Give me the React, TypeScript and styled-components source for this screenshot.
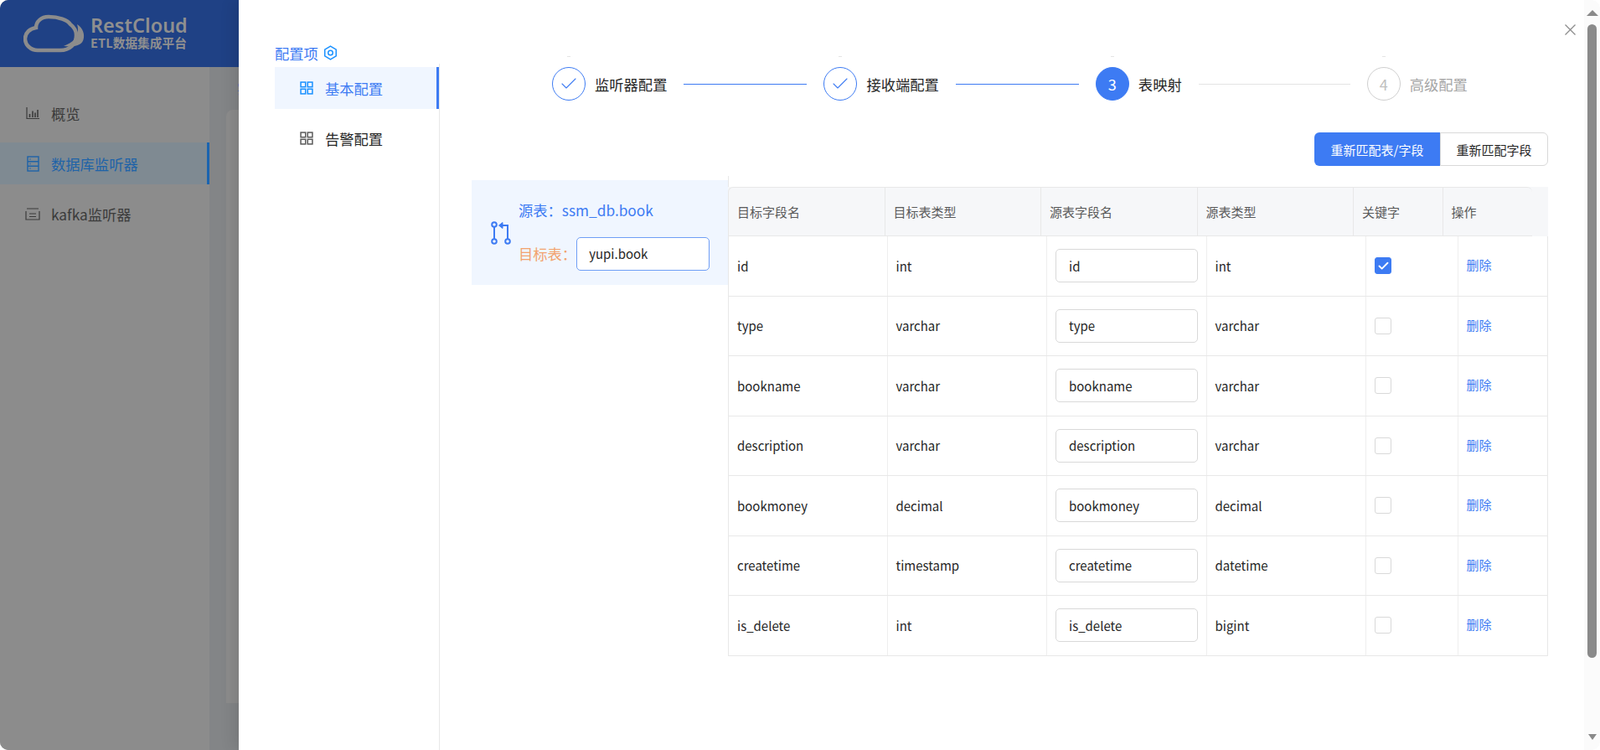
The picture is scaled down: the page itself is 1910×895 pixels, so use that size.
import React from "react";
import styled, { createGlobalStyle } from "styled-components";
import { Check } from "lucide-react";

const GlobalStyle = createGlobalStyle`
  html, body, #root {
    margin: 0;
    height: 100%;
    background: #fff;
  }
  body {
    font-family: "Noto Sans CJK SC", "Noto Sans", sans-serif;
    overflow: hidden;
  }
  * {
    box-sizing: border-box;
  }
`;

interface FieldRow {
  target: string;
  targetType: string;
  source: string;
  sourceType: string;
  isKey?: boolean;
}

const rows: FieldRow[] = [
  { target: "id", targetType: "int", source: "id", sourceType: "int", isKey: true },
  { target: "type", targetType: "varchar", source: "type", sourceType: "varchar" },
  { target: "bookname", targetType: "varchar", source: "bookname", sourceType: "varchar" },
  { target: "description", targetType: "varchar", source: "description", sourceType: "varchar" },
  { target: "bookmoney", targetType: "decimal", source: "bookmoney", sourceType: "decimal" },
  { target: "createtime", targetType: "timestamp", source: "createtime", sourceType: "datetime" },
  { target: "is_delete", targetType: "int", source: "is_delete", sourceType: "bigint" },
];

const steps = [
  { label: "监听器配置", state: "done", line: 147 },
  { label: "接收端配置", state: "done", line: 147 },
  { label: "表映射", state: "active", line: 181 },
  { label: "高级配置", state: "todo", line: 0 },
];

const headers = ["目标字段名", "目标表类型", "源表字段名", "源表类型", "关键字", "操作"];

const CloudLogo = () => (
  <svg width="74" height="46" viewBox="0 0 74 46" fill="none">
    <path
      d="M48 38c10 1 23 1 24-10 1-7-3-13-8-16 2 6 1 14-3 18-3 3-8 6-13 8z"
      fill="#8c8c8c"
    />
    <path
      d="M30 3c-9 0-15 6-15 13-7 1-13 6-13 13 0 8 7 14 15 14h27c11 0 19-7 19-18 0-6-3-10-7-13C53 7 42 3 30 3z"
      stroke="#8c8c8c"
      strokeWidth="4.500"
    />
  </svg>
);

const ChartIcon = () => (
  <svg width="16" height="16" viewBox="0 0 16 16" fill="none" stroke="#3b3b3b" strokeWidth="1.2">
    <path d="M1 1v13.500h15" />
    <path d="M4.500 13V9M8 13V5.500M11 13V7.500M14 13V4" strokeWidth="1.600" />
  </svg>
);

const DatabaseIcon = () => (
  <svg width="15" height="19" viewBox="0 0 15 19" fill="none" stroke="#1e63a8" strokeWidth="1.4">
    <rect x="1" y="1" width="13" height="17" />
    <path d="M1 6.700h13M1 12.300h13" />
    <path d="M3.500 4h1M3.500 9.500h1M3.500 15h1" />
  </svg>
);

const ListIcon = () => (
  <svg width="18" height="15" viewBox="0 0 18 15" fill="none" stroke="#3b3b3b" strokeWidth="1.2">
    <path d="M2 1h14M1 4v10h16V4M5 7h8M5 10.500h8" />
  </svg>
);

const HexIcon = () => (
  <svg width="17" height="18" viewBox="0 0 15 16" fill="none" stroke="#1890ff" strokeWidth="1.3">
    <path d="M7.500 1l6 3.500v7l-6 3.500-6-3.500v-7z" />
    <circle cx="7.500" cy="8" r="2.500" />
  </svg>
);

const GridIcon = ({ color }: { color: string }) => (
  <svg width="16" height="16" viewBox="0 0 15 15" fill="none" stroke={color} strokeWidth="1.4">
    <rect x="1" y="1" width="5.300" height="5.300" />
    <rect x="8.700" y="1" width="5.300" height="5.300" />
    <rect x="1" y="8.700" width="5.300" height="5.300" />
    <rect x="8.700" y="8.700" width="5.300" height="5.300" />
  </svg>
);

const BranchIcon = () => (
  <svg width="24" height="28" viewBox="0 0 24 28" fill="none" stroke="#3d7bf3" strokeWidth="2">
    <circle cx="4" cy="4" r="2.800" />
    <circle cx="4" cy="24" r="2.800" />
    <circle cx="20" cy="24" r="2.800" />
    <path d="M4 7v14M20 21V5h-6" />
    <path d="M14 1.500v7L9.500 5z" fill="#3d7bf3" strokeWidth="1" />
  </svg>
);

const App: React.FC = () => {
  return (
    <Page>
      <GlobalStyle />
      <Shell>
        <TopBar>
          <CloudLogo />
          <Brand>
            <BrandName>RestCloud</BrandName>
            <BrandSub>ETL数据集成平台</BrandSub>
          </Brand>
        </TopBar>
        <ShellBody>
          <SideNav>
            <SideItem>
              <SideIcon><ChartIcon /></SideIcon>
              概览
            </SideItem>
            <SideItem $active>
              <SideIcon><DatabaseIcon /></SideIcon>
              数据库监听器
            </SideItem>
            <SideItem>
              <SideIcon><ListIcon /></SideIcon>
              kafka监听器
            </SideItem>
          </SideNav>
          <Content>
            <Crumb>实</Crumb>
            <ContentCard />
          </Content>
        </ShellBody>
      </Shell>

      <Drawer>
        <ConfigColumn>
          <ConfigTitle>
            配置项 <HexIcon />
          </ConfigTitle>
          <ConfigMenu>
            <ConfigItem $active>
              <GridIcon color="#1890ff" />
              基本配置
            </ConfigItem>
            <ConfigItem>
              <GridIcon color="#595959" />
              告警配置
            </ConfigItem>
          </ConfigMenu>
        </ConfigColumn>

        <Main>
          <Steps>
            {steps.map((step, i) => (
              <React.Fragment key={step.label}>
                <StepCircle $state={step.state}>
                  {step.state === "done" ? <Check size={24} strokeWidth={1.1} /> : i + 1}
                </StepCircle>
                <StepLabel $state={step.state}>{step.label}</StepLabel>
                {step.line > 0 && <StepLine $width={step.line} $done={step.state === "done"} />}
              </React.Fragment>
            ))}
          </Steps>

          <Actions>
            <PrimaryButton>重新匹配表/字段</PrimaryButton>
            <DefaultButton>重新匹配字段</DefaultButton>
          </Actions>

          <Mapping>
            <TableCard>
              <BranchIcon />
              <TableCardText>
                <SourceLine>源表：ssm_db.book</SourceLine>
                <TargetLine>
                  目标表：
                  <TargetInput defaultValue="yupi.book" />
                </TargetLine>
              </TableCardText>
            </TableCard>

            <FieldTable>
              <HeadWrap>
                <HeadRow>
                  {headers.map((h) => (
                    <HeadCell key={h}>{h}</HeadCell>
                  ))}
                </HeadRow>
              </HeadWrap>
              {rows.map((row) => (
                <BodyRow key={row.target}>
                  <Cell>{row.target}</Cell>
                  <Cell>{row.targetType}</Cell>
                  <Cell>
                    <FieldInput defaultValue={row.source} />
                  </Cell>
                  <Cell>{row.sourceType}</Cell>
                  <Cell>
                    <CheckBox $checked={row.isKey}>
                      {row.isKey && <Check size={15} strokeWidth={3} color="#fff" />}
                    </CheckBox>
                  </Cell>
                  <Cell>
                    <DeleteLink>删除</DeleteLink>
                  </Cell>
                </BodyRow>
              ))}
            </FieldTable>
          </Mapping>
        </Main>

        <CloseButton aria-label="close">
          <svg width="15" height="15" viewBox="0 0 15 15" stroke="#8c8c8c" strokeWidth="1.300">
            <path d="M1.500 1.500l12 12M13.500 1.500l-12 12" />
          </svg>
        </CloseButton>

        <ScrollTrack>
          <ArrowUp />
          <ScrollThumb />
          <ArrowDown />
        </ScrollTrack>
      </Drawer>
    </Page>
  );
};

const Page = styled.div`
  position: relative;
  width: 1910px;
  height: 895px;
  overflow: hidden;
  background: #fff;
`;

const Shell = styled.div`
  display: flex;
  flex-direction: column;
  height: 100%;
  border-radius: 10px;
  overflow: hidden;
  background: #8c8c8c;
`;

const TopBar = styled.div`
  display: flex;
  align-items: center;
  gap: 6px;
  height: 80px;
  padding-left: 28px;
  background: #1f4185;
`;

const Brand = styled.div`
  display: flex;
  flex-direction: column;
  color: #8f8f8f;
  margin-top: -3px;
`;

const BrandName = styled.div`
  font-family: "Noto Sans", sans-serif;
  font-size: 23.500px;
  font-weight: 600;
  line-height: 24px;
`;

const BrandSub = styled.div`
  font-size: 14.700px;
  font-weight: 700;
  line-height: 18px;
  white-space: nowrap;
`;

const ShellBody = styled.div`
  flex: 1;
  display: flex;
  min-height: 0;
`;

const SideNav = styled.div`
  width: 250px;
  padding-top: 30px;
  display: flex;
  flex-direction: column;
  gap: 10px;
  background: #8c8c8c;
`;

const SideItem = styled.div<{ $active?: boolean }>`
  display: flex;
  align-items: center;
  height: 50px;
  padding-left: 30px;
  font-size: 17.300px;
  color: ${(p) => (p.$active ? "#1e63a8" : "#3b3b3b")};
  background: ${(p) => (p.$active ? "#7f8a92" : "transparent")};
  border-right: 3px solid ${(p) => (p.$active ? "#1a64b0" : "transparent")};
`;

const SideIcon = styled.span`
  display: flex;
  justify-content: center;
  width: 18px;
  margin-right: 13px;
`;

const Content = styled.div`
  flex: 1;
  display: flex;
  flex-direction: column;
  padding: 12px 0 56px 20px;
  background: #838587;
`;

const Crumb = styled.div`
  height: 39px;
  margin-left: 13px;
  font-size: 16px;
  line-height: 26px;
  color: #1e63a8;
`;

const ContentCard = styled.div`
  flex: 1;
  background: #8c8c8c;
  border-radius: 8px 0 0 0;
`;

const Drawer = styled.div`
  position: absolute;
  top: 0;
  bottom: 0;
  left: 285px;
  right: 0;
  display: flex;
  background: #fff;
  box-shadow: -6px 0 16px rgba(0, 0, 0, 0.1);
`;

const ConfigColumn = styled.div`
  width: 240px;
  padding-left: 43px;
  display: flex;
  flex-direction: column;
  flex-shrink: 0;
`;

const ConfigTitle = styled.div`
  display: flex;
  align-items: center;
  gap: 6px;
  height: 26px;
  margin-top: 50px;
  font-size: 17.300px;
  color: #3d7bf3;
`;

const ConfigMenu = styled.div`
  flex: 1;
  padding-top: 4px;
  display: flex;
  flex-direction: column;
  gap: 10px;
  border-right: 1px solid #e8e8e8;
`;

const ConfigItem = styled.div<{ $active?: boolean }>`
  display: flex;
  align-items: center;
  gap: 14px;
  height: 50px;
  padding-left: 30px;
  font-size: 17.300px;
  color: ${(p) => (p.$active ? "#3d7bf3" : "#262626")};
  background: ${(p) => (p.$active ? "#f0f6ff" : "transparent")};
  border-right: 3px solid ${(p) => (p.$active ? "#3d7bf3" : "transparent")};
`;

const Main = styled.div`
  flex: 1;
  min-width: 0;
  padding: 80px 43px 0 38px;
  display: flex;
  flex-direction: column;
`;

const Steps = styled.div`
  display: flex;
  align-items: center;
  height: 40px;
  padding-left: 96px;
`;

const StepCircle = styled.div<{ $state: string }>`
  position: relative;
  display: flex;
  align-items: center;
  justify-content: center;
  flex-shrink: 0;
  width: 40px;
  height: 40px;
  border-radius: 50%;
  font-size: 18px;
  color: ${(p) => (p.$state === "active" ? "#fff" : p.$state === "done" ? "#3d7bf3" : "#bfbfbf")};
  background: ${(p) => (p.$state === "active" ? "#3d7bf3" : "#fff")};
  border: 1px solid ${(p) => (p.$state === "todo" ? "#cfcfcf" : "#3d7bf3")};

  &::before {
    content: "";
    position: absolute;
    top: -14px;
    left: 50%;
    width: 4px;
    height: 1px;
    margin-left: -2px;
    background: #e4e4e4;
  }
`;

const StepLabel = styled.div<{ $state: string }>`
  margin-left: 11px;
  font-size: 17.300px;
  white-space: nowrap;
  color: ${(p) => (p.$state === "todo" ? "#a6a6a6" : "#262626")};
`;

const StepLine = styled.div<{ $width: number; $done: boolean }>`
  width: ${(p) => p.$width}px;
  height: 1px;
  margin: 0 20px;
  background: ${(p) => (p.$done ? "#3d7bf3" : "#e4e4e4")};
`;

const Actions = styled.div`
  display: flex;
  justify-content: flex-end;
  margin-top: 38px;
`;

const PrimaryButton = styled.button`
  width: 150px;
  height: 40px;
  border: 0;
  border-radius: 6px 0 0 6px;
  background: #3d7bf3;
  color: #fff;
  font: inherit;
  font-size: 15px;
`;

const DefaultButton = styled.button`
  width: 129px;
  height: 40px;
  border: 1px solid #d9d9d9;
  border-radius: 0 6px 6px 0;
  background: #fff;
  color: #262626;
  font: inherit;
  font-size: 15px;
`;

const Mapping = styled.div`
  display: flex;
  margin-top: 12px;
`;

const TableCard = styled.div`
  display: flex;
  align-items: center;
  gap: 9px;
  flex-shrink: 0;
  width: 306px;
  height: 125px;
  margin-top: 5px;
  padding-left: 23px;
  background: #f0f6ff;
`;

const TableCardText = styled.div`
  display: flex;
  flex-direction: column;
  gap: 20px;
  margin-top: 5px;
`;

const SourceLine = styled.div`
  font-size: 17.300px;
  line-height: 25px;
  color: #3d7bf3;
`;

const TargetLine = styled.div`
  display: flex;
  align-items: center;
  font-size: 17.300px;
  color: #f2a36e;
`;

const TargetInput = styled.input`
  width: 159px;
  height: 40px;
  padding: 0 14px;
  border: 1px solid #6f9ef5;
  border-radius: 5px;
  background: #fff;
  color: #262626;
  font: inherit;
  font-size: 15px;
  outline: none;
`;

const FieldTable = styled.div`
  flex: 1;
  min-width: 0;
  padding-top: 13px;
  border-left: 1px solid #e8e8e8;
`;

const HeadWrap = styled.div`
  padding-right: 19px;
  margin-left: -1px;
  background: #f6f7f9;
`;

const HeadRow = styled.div`
  display: grid;
  grid-template-columns: 186.500px repeat(3, 186.500px) 106.500px 1fr;
  height: 59px;
  border-top: 1px solid #e8e8e8;
  border-left: 1px solid #e8e8e8;
  border-bottom: 1px solid #e8e8e8;
  border-radius: 6px 6px 0 0;
  background: #f6f7f9;
`;

const HeadCell = styled.div`
  display: flex;
  align-items: center;
  padding-left: 10px;
  font-size: 15px;
  color: #595959;
  border-right: 1px solid #e8e8e8;

  &:last-child {
    border-right: 0;
  }
`;

const BodyRow = styled.div`
  display: grid;
  grid-template-columns: 189.500px repeat(3, 190.500px) 109.500px 1fr;
  height: 71.500px;
  border-bottom: 1px solid #e8e8e8;
  border-right: 1px solid #e8e8e8;
`;

const Cell = styled.div`
  display: flex;
  align-items: center;
  padding-left: 10px;
  font-size: 15px;
  color: #262626;
  border-right: 1px solid #eeeeee;

  &:last-child {
    border-right: 0;
  }
`;

const FieldInput = styled.input`
  width: 170px;
  height: 40px;
  padding: 0 15px;
  border: 1px solid #d9d9d9;
  border-radius: 5px;
  background: #fff;
  color: #262626;
  font: inherit;
  font-size: 15px;
  outline: none;
`;

const CheckBox = styled.span<{ $checked?: boolean }>`
  display: flex;
  align-items: center;
  justify-content: center;
  width: 20px;
  height: 20px;
  border-radius: 3px;
  background: ${(p) => (p.$checked ? "#3d7bf3" : "#fff")};
  border: 1px solid ${(p) => (p.$checked ? "#3d7bf3" : "#d9d9d9")};
`;

const DeleteLink = styled.a`
  font-size: 15px;
  line-height: 20px;
  margin-top: -2px;
  color: #3d7bf3;
`;

const CloseButton = styled.button`
  position: absolute;
  top: 28px;
  right: 28px;
  display: flex;
  padding: 0;
  border: 0;
  background: none;
`;

const ScrollTrack = styled.div`
  position: relative;
  flex-shrink: 0;
  width: 19px;
  background: #fbfbfb;
  border-radius: 0 10px 10px 0;
  display: flex;
  flex-direction: column;
  align-items: center;
  padding: 12px 0 12px;
`;

const ArrowUp = styled.div`
  width: 0;
  height: 0;
  border-left: 7px solid transparent;
  border-right: 7px solid transparent;
  border-bottom: 7px solid #8a8a8a;
`;

const ArrowDown = styled.div`
  width: 0;
  height: 0;
  margin-top: auto;
  border-left: 5px solid transparent;
  border-right: 5px solid transparent;
  border-top: 7px solid #8a8a8a;
`;

const ScrollThumb = styled.div`
  width: 11px;
  height: 756px;
  margin-top: 10px;
  border-radius: 6px;
  background: #8a8a8a;
`;

export default App;
